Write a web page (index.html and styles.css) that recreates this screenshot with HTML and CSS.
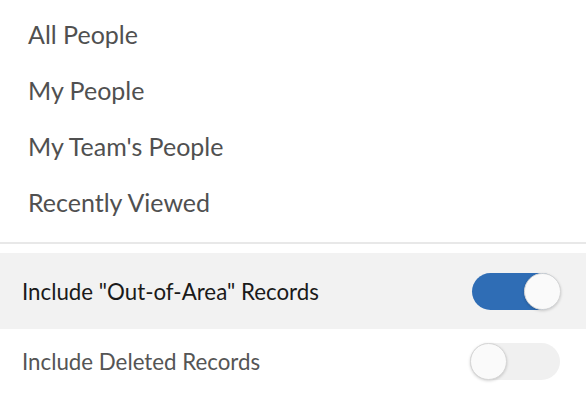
FILE: index.html
```html
<!DOCTYPE html>
<html>
<head>
<meta charset="utf-8">
<link rel="stylesheet" href="styles.css">
</head>
<body>
<div class="panel">
  <ul class="menu">
    <li class="menu-item">All People</li>
    <li class="menu-item">My People</li>
    <li class="menu-item">My Team's People</li>
    <li class="menu-item">Recently Viewed</li>
  </ul>
  <hr class="divider">
  <div class="option option-active">
    <span class="option-label">Include "Out-of-Area" Records</span>
    <span class="toggle toggle-on"><span class="knob"></span></span>
  </div>
  <div class="option">
    <span class="option-label option-label-muted">Include Deleted Records</span>
    <span class="toggle"><span class="knob"></span></span>
  </div>
</div>
</body>
</html>
```
FILE: styles.css
```css
html, body {
  margin: 0;
  padding: 0;
  background: #fff;
}
body {
  font-family: Lato, "Open Sans", sans-serif;
}
.panel {
  width: 586px;
}
.menu {
  list-style: none;
  margin: 0;
  padding: 6px 0 0 0;
}
.menu-item {
  padding-left: 28px;
  height: 56px;
  line-height: 56px;
  font-size: 25px;
  color: #505050;
}
.divider {
  border: 0;
  height: 2px;
  background: #e8e8e8;
  margin: 12px 0 9px 0;
}
.option {
  display: flex;
  align-items: center;
  justify-content: space-between;
  height: 64px;
  padding: 0 26px 0 22px;
}
.option-active {
  background: #f2f2f2;
  height: 76px;
}
.option-label {
  font-size: 22.3px;
  color: #1a1a1a;
}
.option-label-muted {
  color: #555;
}
.toggle {
  position: relative;
  display: block;
  width: 90px;
  height: 37px;
  border-radius: 19px;
  background: #f0f0f0;
}
.toggle-on {
  width: 88px;
  background: #2f6db5;
}
.knob {
  position: absolute;
  top: 0;
  left: 0;
  width: 35px;
  height: 35px;
  border-radius: 50%;
  background: #fafafa;
  border: 1px solid #d6d6d6;
  box-shadow: 0 1px 3px rgba(0,0,0,0.18);
}
.toggle-on .knob {
  left: auto;
  right: -1px;
}
```
